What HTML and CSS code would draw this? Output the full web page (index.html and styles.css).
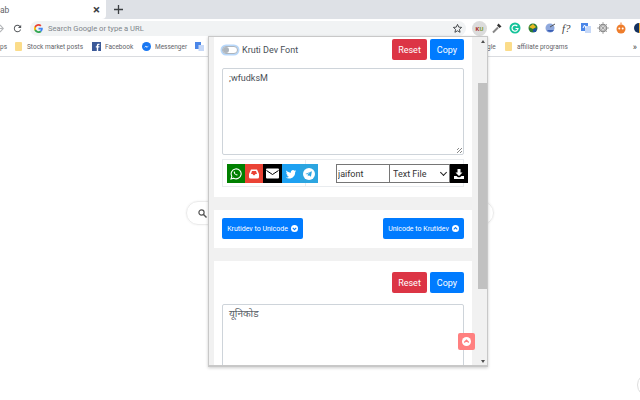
FILE: index.html
```html
<!DOCTYPE html>
<html lang="en">
<head>
  <meta charset="UTF-8">
  <title>Kruti Dev Font Converter</title>
  <link rel="stylesheet" href="styles.css">
</head>
<body>
  <div class="tabstrip">
    <div class="tab">
      <span class="tab-title">ab</span>
      <span class="tab-close">&#215;</span>
    </div>
    <svg class="tab-new" width="9" height="9" viewBox="0 0 9 9"><path d="M4.500 0v9M0 4.500h9" stroke="#3c4043" stroke-width="1.300"/></svg>
  </div>

  <div class="toolbar">
    <svg class="forward" width="4" height="9" viewBox="0 0 4 9"><path d="M0 1l3.300 3.500L0 8M-3 4.500h6" fill="none" stroke="#b5b7ba" stroke-width="1.100"/></svg>
    <svg class="reload" width="11" height="11" viewBox="0 0 24 24"><path fill="#55585c" d="M17.650 6.350A7.958 7.958 0 0 0 12 4c-4.420 0-7.990 3.580-7.990 8s3.570 8 7.990 8c3.730 0 6.840-2.550 7.730-6h-2.080A5.990 5.990 0 0 1 12 18c-3.310 0-6-2.690-6-6s2.690-6 6-6c1.660 0 3.140.69 4.220 1.780L13 11h7V4l-2.350 2.350z"/></svg>
    <div class="omnibox">
      <svg class="g-logo" width="9" height="9" viewBox="0 0 18 18">
        <path fill="#4285f4" d="M17.600 9.200c0-.6-.1-1.200-.2-1.800H9v3.400h4.800c-.2 1.100-.8 2-1.800 2.700v2.200h2.900c1.700-1.600 2.700-3.900 2.700-6.500z"/>
        <path fill="#34a853" d="M9 18c2.400 0 4.500-.8 5.900-2.200L12 13.500c-.8.500-1.800.9-3 .9-2.300 0-4.300-1.600-5-3.700H1v2.300C2.500 16 5.500 18 9 18z"/>
        <path fill="#fbbc05" d="M4 10.700c-.4-1.100-.4-2.300 0-3.400V5H1c-1.300 2.500-1.300 5.500 0 8z"/>
        <path fill="#ea4335" d="M9 3.600c1.300 0 2.500.5 3.400 1.300L15 2.400C13.400.9 11.300 0 9 0 5.500 0 2.500 2 1 5l3 2.300c.7-2.100 2.700-3.700 5-3.700z"/>
      </svg>
      <span class="omni-text">Search Google or type a URL</span>
      <svg class="star" width="11" height="11" viewBox="0 0 24 24"><path fill="none" stroke="#3c4043" stroke-width="2" d="M12 3l2.700 6 6.300.6-4.800 4.300 1.400 6.400L12 17l-5.600 3.300 1.400-6.400L3 9.600 9.300 9z"/></svg>
    </div>
    <div class="extensions">
      <span class="ext ext-active"><span class="ext-k">K</span><span class="ext-u">U</span></span>
      <svg class="ext" width="12" height="12" viewBox="0 0 12 12"><path d="M2 10.500l5-5" stroke="#888" stroke-width="2"/><path d="M7.500 1.500l3 3-2 1.500-2.500-2.500z" fill="#333"/></svg>
      <svg class="ext" width="12" height="12" viewBox="0 0 12 12"><circle cx="6" cy="6" r="5.500" fill="#15c39a"/><path d="M8.300 4.200A3 3 0 1 0 9 6.500H6.500" fill="none" stroke="#fff" stroke-width="1.200"/></svg>
      <svg class="ext" width="12" height="12" viewBox="0 0 12 12"><circle cx="6" cy="6" r="4.500" fill="#2d7d32"/><path d="M2 5l4-3 3 3-3 2z" fill="#e8b923"/><path d="M6 7l4-1-1 4-3 0z" fill="#1f4fa3"/></svg>
      <svg class="ext" width="12" height="12" viewBox="0 0 12 12"><circle cx="6" cy="6" r="4.500" fill="#8fa8dc"/><path d="M3 8a4 4 0 0 0 7 0z" fill="#3b5fb5"/><path d="M6 5l5-3" stroke="#555" stroke-width="1"/></svg>
      <span class="ext ext-f">f?</span>
      <svg class="ext" width="12" height="12" viewBox="0 0 12 12"><rect x="1" y="1" width="7" height="8" fill="#4a86e8"/><rect x="5" y="4" width="6" height="7" fill="#c6d8f7"/><path d="M3 6l1.500-3L6 6" fill="none" stroke="#fff"/></svg>
      <svg class="ext" width="12" height="12" viewBox="0 0 12 12"><circle cx="6" cy="6" r="3.500" fill="none" stroke="#888" stroke-width="1.500"/><path d="M6 0v12M0 6h12M2 2l8 8M10 2l-8 8" stroke="#999" stroke-width=".8"/></svg>
      <svg class="ext" width="12" height="12" viewBox="0 0 12 12"><circle cx="6" cy="7" r="4.500" fill="#ee7d2c"/><circle cx="4.300" cy="6.500" r="1" fill="#fff"/><circle cx="7.700" cy="6.500" r="1" fill="#fff"/><path d="M6 2.500V.5" stroke="#ee7d2c"/></svg>
      <svg class="ext" width="12" height="12" viewBox="0 0 12 12"><path d="M6 1a5 5 0 0 0 0 10z" fill="#14315f"/><path d="M6 1a5 5 0 0 1 0 10z" fill="#f1a92b"/></svg>
    </div>
  </div>

  <div class="bookmarks">
    <span class="bm-text bm-cut">ps</span>
    <span class="folder"></span>
    <span class="bm-text bm-stock">Stock market posts</span>
    <svg class="bm-icon" width="9" height="9" viewBox="0 0 9 9"><rect width="9" height="9" fill="#3b5998"/><path d="M6.200 9V5.600h1.100l.2-1.300H6.200v-.8c0-.4.100-.6.600-.6h.7V1.700H6.500C5.400 1.700 4.800 2.300 4.800 3.400v.9h-1v1.300h1V9z" fill="#fff"/></svg>
    <span class="bm-text bm-fb">Facebook</span>
    <svg class="bm-icon" width="9" height="9" viewBox="0 0 9 9"><circle cx="4.500" cy="4.500" r="4.500" fill="#1877f2"/><path d="M1.800 6l2-2.300 1.300 1 1.900-1.200-2 2.300-1.300-1z" fill="#fff"/></svg>
    <span class="bm-text bm-ms">Messenger</span>
    <svg class="bm-icon bm-tr" width="9" height="9" viewBox="0 0 9 9"><rect width="6" height="7" fill="#4a86e8"/><rect x="3.500" y="3" width="5.500" height="6" fill="#c6d8f7"/></svg>
    <span class="bm-text bm-gle">gle</span>
    <span class="folder"></span>
    <span class="bm-text bm-aff">affiliate programs</span>
    <span class="bm-more">&#187;</span>
  </div>

  <main class="newtab">
    <div class="searchbox">
      <svg width="9" height="9" viewBox="0 0 9 9"><circle cx="3.500" cy="3.500" r="2.600" fill="none" stroke="#555" stroke-width="1.200"/><path d="M5.500 5.500L8.500 8.500" stroke="#555" stroke-width="1.400"/></svg>
    </div>
    <div class="corner-circle"></div>
  </main>

  <div class="popup">
    <div class="pane">
      <section class="card card-first">
        <div class="head">
          <label class="switch-label"><span class="switch"><span class="knob"></span></span>Kruti Dev Font</label>
          <div class="actions">
            <button class="btn btn-red">Reset</button>
            <button class="btn btn-blue">Copy</button>
          </div>
        </div>
        <div class="area area-top">;wfudksM<span class="grip"></span></div>
        <div class="share-row">
          <div class="share-cell">
            <a class="share share-wa">
              <svg width="12" height="12" viewBox="0 0 12 12"><path d="M1 11l.8-2.700A5 5 0 1 1 3.700 10.200z" fill="none" stroke="#fff" stroke-width="1.100"/><path d="M4.200 3.300c-.8.700-.5 1.900.6 3 1.100 1.100 2.300 1.500 3 .7l-1-1-.6.400-1.400-1.500.4-.6z" fill="#fff"/></svg>
            </a>
            <a class="share share-red">
              <svg width="12" height="12" viewBox="0 0 12 12"><path d="M3 1.500h6L11 6v3a1.500 1.500 0 0 1-1.500 1.500h-7A1.500 1.500 0 0 1 1 9V6z" fill="#fff"/><path d="M3 6h1.500l1 1.200h1L7.500 6H9L8 3H4z" fill="#ea4335"/></svg>
            </a>
            <a class="share share-black">
              <svg width="13" height="11" viewBox="0 0 13 11"><rect y=".5" width="13" height="10" rx="1" fill="#fff"/><path d="M.5 2.500l6 4 6-4" fill="none" stroke="#000" stroke-width="1"/></svg>
            </a>
            <a class="share share-tw">
              <svg width="12" height="12" viewBox="0 0 24 24"><path fill="#fff" d="M22.460 6c-.77.35-1.600.58-2.460.69.880-.53 1.560-1.370 1.880-2.380-.83.500-1.750.85-2.720 1.050C18.370 4.500 17.260 4 16 4c-2.350 0-4.270 1.920-4.270 4.290 0 .34.040.67.110.98C8.280 9.090 5.110 7.380 3 4.790c-.37.63-.58 1.370-.58 2.150 0 1.490.75 2.810 1.910 3.560-.71 0-1.370-.2-1.950-.5v.03c0 2.080 1.480 3.820 3.440 4.210a4.220 4.220 0 0 1-1.930.07 4.280 4.280 0 0 0 4 2.980 8.521 8.521 0 0 1-5.330 1.840c-.34 0-.68-.02-1.020-.06C3.440 20.290 5.700 21 8.120 21 16 21 20.330 14.460 20.330 8.790c0-.19 0-.37-.01-.56.840-.6 1.560-1.360 2.140-2.230z"/></svg>
            </a>
            <a class="share share-tg">
              <svg width="12" height="12" viewBox="0 0 12 12"><circle cx="6" cy="6" r="6" fill="#fff"/><path d="M2.300 5.900l6.600-2.600-1 5.400-2-1.400-1 1-.2-1.700 3-2.500-3.700 2.200z" fill="#2ca5e0"/></svg>
            </a>
          </div>
          <div class="save-cell">
            <input class="file-name" type="text" value="jaifont">
            <span class="select-wrap"><select class="file-type"><option>Text File</option></select></span>
            <a class="share share-black share-dl">
              <svg width="12" height="12" viewBox="0 0 12 12"><path d="M4.500 1h3v3.500h2L6 8 2.500 4.500h2z" fill="#fff"/><path d="M1 8h2.500L5 9.300h2L8.500 8H11v3H1z" fill="#fff"/></svg>
            </a>
          </div>
        </div>
      </section>

      <section class="card card-convert">
        <button class="btn btn-blue btn-small">Krutidev to Unicode
          <svg width="7" height="7" viewBox="0 0 8 8"><circle cx="4" cy="4" r="4" fill="#fff"/><path d="M2 3.300l2 2 2-2" fill="none" stroke="#007bff" stroke-width="1.200"/></svg>
        </button>
        <button class="btn btn-blue btn-small">Unicode to Krutidev
          <svg width="7" height="7" viewBox="0 0 8 8"><circle cx="4" cy="4" r="4" fill="#fff"/><path d="M2 4.900l2-2 2 2" fill="none" stroke="#007bff" stroke-width="1.200"/></svg>
        </button>
      </section>

      <section class="card card-last">
        <div class="head head-end">
          <div class="actions">
            <button class="btn btn-red">Reset</button>
            <button class="btn btn-blue">Copy</button>
          </div>
        </div>
        <div class="area area-bottom" lang="hi">यूनिकोड</div>
      </section>
    </div>

    <div class="scrollbar">
      <span class="arrow arrow-up"></span>
      <span class="thumb"></span>
      <span class="arrow arrow-down"></span>
    </div>

    <a class="to-top">
      <svg width="9" height="9" viewBox="0 0 8 8"><circle cx="4" cy="4" r="4" fill="#fff"/><path d="M2 4.900l2-2 2 2" fill="none" stroke="#ff8080" stroke-width="1.200"/></svg>
    </a>
  </div>
</body>
</html>
```

FILE: styles.css
```css
* {
  box-sizing: border-box;
  margin: 0;
}
body {
  width: 640px;
  height: 400px;
  overflow: hidden;
  background: #fff;
  font-family: Roboto, "Liberation Sans", sans-serif;
  color: #5f6368;
  position: relative;
}

/* browser chrome */
.tabstrip {
  height: 19px;
  background: #dee1e6;
  display: flex;
  align-items: center;
}
.tab {
  width: 106px;
  height: 19px;
  background: #fff;
  border-bottom-right-radius: 4px;
  display: flex;
  align-items: center;
  justify-content: space-between;
  padding-right: 6px;
  font-size: 8.500px;
}
.tab-close {
  font-size: 13px;
  font-weight: 700;
  color: #3c4043;
}
.tab-new {
  margin-left: 8px;
}
.toolbar {
  height: 18px;
  background: #fff;
  display: flex;
  align-items: center;
}
.forward {
  flex: none;
}
.reload {
  flex: none;
  margin-left: 8px;
}
.omnibox {
  flex: none;
  margin-left: 7px;
  width: 436px;
  height: 15px;
  border-radius: 8px;
  background: #f1f3f4;
  display: flex;
  align-items: center;
  padding: 0 3px 0 4px;
}
.omni-text {
  margin-left: 5px;
  flex: 1;
  font-size: 7.600px;
  color: #80868b;
}
.extensions {
  flex: none;
  margin-left: 6px;
  display: flex;
  align-items: center;
  gap: 5.700px;
}
.ext {
  flex: none;
  width: 12px;
  height: 12px;
}
.ext-active {
  width: 15px;
  height: 15px;
  margin-right: -1.500px;
  border-radius: 50%;
  background: #dcdcdc;
  font-size: 6px;
  font-weight: 700;
  display: flex;
  align-items: center;
  justify-content: center;
}
.ext-k {
  color: #a33;
}
.ext-u {
  color: #7a9a2c;
}
.ext-f {
  font-family: "Liberation Serif", serif;
  font-style: italic;
  font-size: 11px;
  line-height: 12px;
  color: #444;
}
.bookmarks {
  height: 20px;
  border-bottom: 1px solid #dadce0;
  background: #fff;
  display: flex;
  align-items: center;
  font-size: 6.500px;
}
.bm-text {
  margin-left: 5px;
  white-space: nowrap;
}
.bm-cut {
  margin-left: 0;
  width: 15px;
}
.bm-stock {
  width: 55px;
}
.bm-fb {
  margin-left: 4px;
  width: 27px;
}
.bm-ms {
  margin-left: 4px;
  width: 32px;
}
.bm-aff {
  width: 51px;
}
.folder {
  width: 7px;
  height: 9px;
  flex: none;
  background: #fbdc8a;
  border-radius: 1px;
}
.bm-icon {
  flex: none;
  margin-left: 10px;
}
.bm-tr {
  margin-left: 8px;
}
.bm-gle {
  margin-left: 283px;
  width: 18px;
}
.bm-more {
  margin-left: auto;
  margin-right: 3px;
  font-size: 9px;
  color: #444;
}

/* new tab page behind the popup */
.newtab {
  position: relative;
  height: 344px;
}
.searchbox {
  position: absolute;
  left: 186px;
  top: 144px;
  width: 308px;
  height: 24px;
  border-radius: 12px;
  border: 1px solid #ebebeb;
  box-shadow: 0 0 2px rgba(0, 0, 0, .08);
  display: flex;
  align-items: center;
  padding-left: 11px;
}
.corner-circle {
  position: absolute;
  left: 637px;
  top: 316px;
  width: 24px;
  height: 24px;
  border-radius: 50%;
  border: 1px solid #ddd;
}

/* extension popup */
.popup {
  position: absolute;
  left: 208px;
  top: 36px;
  width: 280px;
  height: 331px;
  display: flex;
  background: #f1f1f1;
  border: 1px solid #c8c8c8;
  border-bottom-width: 2px;
  box-shadow: 0 1px 3px rgba(0, 0, 0, .2);
}
.pane {
  width: 269px;
  height: 100%;
  overflow: hidden;
  padding-left: 5px;
}
.card {
  width: 258px;
  background: #fff;
  padding: 2px 8px 10px;
  margin-bottom: 13px;
}
.card-convert {
  display: flex;
  justify-content: space-between;
  padding: 8px 8px 9px;
}
.card-last {
  padding: 11px 8px 0;
  margin-bottom: 0;
}
.head {
  display: flex;
  align-items: center;
  justify-content: space-between;
  margin-bottom: 8px;
}
.head-end {
  justify-content: flex-end;
  margin-bottom: 11px;
}
.switch-label {
  display: flex;
  align-items: center;
  font-size: 9px;
  color: #495057;
}
.switch {
  width: 16px;
  height: 8px;
  margin-right: 4px;
  border-radius: 4px;
  background: #fff;
  border: 1px solid #adb5bd;
  box-shadow: 0 0 0 1.500px #b8d8fb;
  display: flex;
  align-items: center;
  padding-left: 0;
}
.knob {
  width: 6px;
  height: 6px;
  border-radius: 50%;
  background: #adb5bd;
}
.actions {
  display: flex;
  gap: 3px;
}
.btn {
  height: 21px;
  width: 34px;
  border: none;
  border-radius: 2px;
  color: #fff;
  font-family: inherit;
  font-size: 9px;
  padding: 0;
}
.btn-red {
  width: 35px;
  background: #dc3545;
}
.btn-blue {
  background: #007bff;
}
.btn-small {
  width: 81px;
  font-size: 7px;
  display: flex;
  align-items: center;
  justify-content: center;
  gap: 3px;
  white-space: nowrap;
}
.area {
  position: relative;
  width: 242px;
  border: 1px solid #ced4da;
  border-radius: 2px;
  background: #fff;
  padding: 2px 6px;
  font-size: 9px;
  line-height: 14px;
  color: #495057;
}
.area-top {
  height: 87px;
  margin-bottom: 4px;
}
.grip {
  position: absolute;
  right: 1px;
  bottom: 1px;
  width: 5px;
  height: 5px;
  background: repeating-linear-gradient(135deg, transparent 0 1px, #888 1px 2px);
}
.area-bottom {
  height: 80px;
  padding-top: 1px;
  font-family: "Noto Sans", "Liberation Sans", sans-serif;
  font-size: 10px;
  color: #5a6268;
}
.share-row {
  width: 242px;
  height: 28px;
  border: 1px solid #e9ecef;
  display: flex;
}
.share-cell {
  width: 83px;
  border-right: 1px solid #e9ecef;
  padding: 4px;
  display: flex;
}
.share-cell .share {
  width: 18.200px;
}
.save-cell {
  padding: 4px 0 0 30px;
  display: flex;
  flex: none;
  height: 23px;
}
.share {
  flex: none;
  width: 18px;
  height: 19px;
  display: flex;
  align-items: center;
  justify-content: center;
}
.share-wa {
  background: #008000;
}
.share-red {
  background: #ea4335;
}
.share-black {
  background: #000;
}
.share-tw {
  background: #1da1f2;
}
.share-tg {
  background: #2ca5e0;
}
.file-name {
  width: 54px;
  height: 19px;
  border: 1px solid #767676;
  padding: 0 1px;
  font-family: inherit;
  font-size: 9px;
  color: #333;
}
.select-wrap {
  position: relative;
  width: 60px;
  height: 19px;
}
.select-wrap::after {
  content: "";
  position: absolute;
  right: 4px;
  top: 6px;
  width: 4px;
  height: 4px;
  border-right: 1px solid #222;
  border-bottom: 1px solid #222;
  transform: rotate(45deg);
}
.file-type {
  appearance: none;
  display: block;
  width: 60px;
  height: 19px;
  border: 1px solid #767676;
  border-left: none;
  border-radius: 0;
  background: #fff;
  padding-left: 3px;
  font-family: inherit;
  font-size: 9px;
  color: #333;
}
.scrollbar {
  width: 9px;
  height: 100%;
  background: #f1f1f1;
  display: flex;
  flex-direction: column;
  align-items: center;
  position: relative;
}
.arrow {
  width: 0;
  height: 0;
  border-left: 2.500px solid transparent;
  border-right: 2.500px solid transparent;
}
.arrow-up {
  margin-top: 3px;
  border-bottom: 3px solid #505050;
}
.arrow-down {
  margin-top: 71px;
  border-top: 3px solid #505050;
}
.thumb {
  width: 9px;
  height: 206px;
  margin-top: 40px;
  background: #c1c1c1;
}
.to-top {
  position: absolute;
  left: 249px;
  top: 296px;
  width: 17px;
  height: 17px;
  border-radius: 2px;
  background: #ff8080;
  display: flex;
  align-items: center;
  justify-content: center;
}
```
